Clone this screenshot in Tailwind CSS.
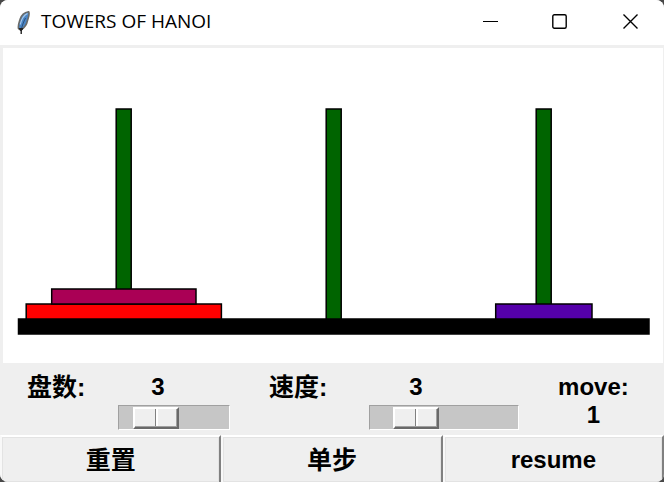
<!DOCTYPE html>
<html lang="zh-CN">
<head>
<meta charset="utf-8">
<meta name="viewport" content="width=device-width, initial-scale=1">
<title>TOWERS OF HANOI</title>
<script src="https://cdn.jsdelivr.net/npm/@tailwindcss/browser@4"></script>
</head>
<body class="bg-[#484848]">
<div class="flex min-h-screen flex-col overflow-hidden rounded-lg bg-[#efefef] font-['Liberation_Sans','Noto_Sans_CJK_SC',sans-serif] text-2xl leading-7 font-bold text-black">
  <header class="flex h-[45px] items-center bg-white pl-4">
    <svg class="h-6 w-4" viewBox="0 0 16 24" aria-hidden="true">
      <path d="M12.600 .8C9 1.500 5.500 4 4.200 8 3.100 11.500 1.800 14.500 2.500 17.500L4.500 19 6 18C9 16 10.800 13 11.500 9.500 12.300 6.500 14 3 12.600 .8Z" fill="#4a86c6" stroke="#6b6b68" stroke-width="1.600"/>
      <path d="M11.500 2.500C8 4 5.500 8 4.200 13.500" fill="none" stroke="#a9c8e8" stroke-width="1.200"/>
      <path d="M9.500 7C7.500 11 6 15 5.200 19" fill="none" stroke="#2a4f7c" stroke-width="1"/>
      <path d="M5.200 17V23" fill="none" stroke="#111" stroke-width="1.300"/>
      <path d="M3.200 17.500L5.200 20 7 17.500Z" fill="#222" stroke="#222"/>
    </svg>
    <h1 class="ml-[9px] flex-1 pb-1 font-['Open_Sans',sans-serif] text-[19px] font-normal">TOWERS OF HANOI</h1>
    <div class="-mr-px flex self-stretch">
      <button class="flex w-[69px] items-center justify-center pb-px" aria-label="Minimize">
        <svg class="h-4 w-4" viewBox="0 0 16 16" fill="none" stroke="#000"><path d="M0 7.500H15"/></svg>
      </button>
      <button class="flex w-[70px] items-center justify-center pb-px" aria-label="Maximize">
        <svg class="h-4 w-4" viewBox="0 0 16 16" fill="none" stroke="#000" stroke-width="1.400"><rect x=".8" y=".8" width="13.400" height="13.400" rx="1.500"/></svg>
      </button>
      <button class="flex w-[70px] items-center justify-center pb-px" aria-label="Close">
        <svg class="h-4 w-4" viewBox="0 0 16 16" fill="none" stroke="#000" stroke-width="1.400"><path d="M1.500 .5L15.500 14.500M15.500 .5L1.500 14.500"/></svg>
      </button>
    </div>
  </header>

  <main class="flex flex-1 flex-col">
    <div class="border-t-[3px] border-r border-l-[3px] border-[#efefef] bg-white">
      <svg class="block w-full" viewBox="3 48 660 315" role="img" aria-label="Towers of Hanoi board">
        <g stroke="#000" stroke-width="1.500">
          <rect x="18.500" y="319" width="630.500" height="15" fill="#000"/>
          <g fill="#006400">
            <rect x="116.200" y="109" width="15" height="210"/>
            <rect x="326.200" y="109" width="15" height="210"/>
            <rect x="536.200" y="109" width="15" height="210"/>
          </g>
          <rect x="26.200" y="304" width="195.200" height="15" fill="#f00"/>
          <rect x="51.700" y="289" width="144.300" height="15" fill="#aa0055"/>
          <rect x="495.700" y="304" width="96.300" height="15" fill="#5500aa"/>
        </g>
      </svg>
    </div>

    <div class="grid h-[72px] grid-cols-[35fr_43fr_22fr] pl-px">
      <div class="flex pl-[26px]">
        <label for="discs" class="w-[91px] pt-[10px] text-[25px]">盘数:</label>
        <div class="flex flex-col pt-[10px]">
          <output for="discs" class="ml-[17px] w-[46px] text-center">3</output>
          <input id="discs" type="range" min="1" max="10" value="3" class="mt-1 h-[25px] w-[112px] appearance-none border border-t-[#a0a0a0] border-r-white border-b-white border-l-[#a0a0a0] bg-[#c6c6c6] [&::-webkit-slider-thumb]:h-[22px] [&::-webkit-slider-thumb]:w-[46px] [&::-webkit-slider-thumb]:appearance-none [&::-webkit-slider-thumb]:border-2 [&::-webkit-slider-thumb]:border-t-white [&::-webkit-slider-thumb]:border-r-[#696969] [&::-webkit-slider-thumb]:border-b-[#696969] [&::-webkit-slider-thumb]:border-l-white [&::-webkit-slider-thumb]:bg-[linear-gradient(90deg,#efefef_20px,#808080_20px,#808080_21px,#fff_21px,#fff_23px,#efefef_23px)] [&::-webkit-slider-thumb]:shadow-[inset_-1px_-1px_0_#a0a0a0]">
        </div>
      </div>
      <div class="flex pl-[37px]">
        <label for="speed" class="w-[100px] pt-[10px] text-[25px]">速度:</label>
        <div class="flex flex-col pt-[10px]">
          <output for="speed" class="ml-6 w-[46px] text-center">3</output>
          <input id="speed" type="range" min="1" max="10" value="3" class="mt-1 h-[25px] w-[150px] appearance-none border border-t-[#a0a0a0] border-r-white border-b-white border-l-[#a0a0a0] bg-[#c6c6c6] [&::-webkit-slider-thumb]:h-[22px] [&::-webkit-slider-thumb]:w-[46px] [&::-webkit-slider-thumb]:appearance-none [&::-webkit-slider-thumb]:border-2 [&::-webkit-slider-thumb]:border-t-white [&::-webkit-slider-thumb]:border-r-[#696969] [&::-webkit-slider-thumb]:border-b-[#696969] [&::-webkit-slider-thumb]:border-l-white [&::-webkit-slider-thumb]:bg-[linear-gradient(90deg,#efefef_20px,#808080_20px,#808080_21px,#fff_21px,#fff_23px,#efefef_23px)] [&::-webkit-slider-thumb]:shadow-[inset_-1px_-1px_0_#a0a0a0]">
        </div>
      </div>
      <p class="pt-[10px] pl-1 text-center">move:<br>1</p>
    </div>

    <div class="grid flex-1 grid-cols-3">
      <button class="border-t-2 border-r-2 border-l-2 border-t-white border-r-[#808080] border-l-[#f8f8f8] text-[25px] shadow-[inset_0_0_0_1px_#e3e3e3]">重置</button>
      <button class="border-t-2 border-r-2 border-l-2 border-t-white border-r-[#808080] border-l-[#f8f8f8] text-[25px] shadow-[inset_0_0_0_1px_#e3e3e3]">单步</button>
      <button class="border-t-2 border-r-2 border-l-2 border-t-white border-r-[#808080] border-l-[#f8f8f8] shadow-[inset_0_0_0_1px_#e3e3e3]">resume</button>
    </div>
  </main>
</div>
</body>
</html>
